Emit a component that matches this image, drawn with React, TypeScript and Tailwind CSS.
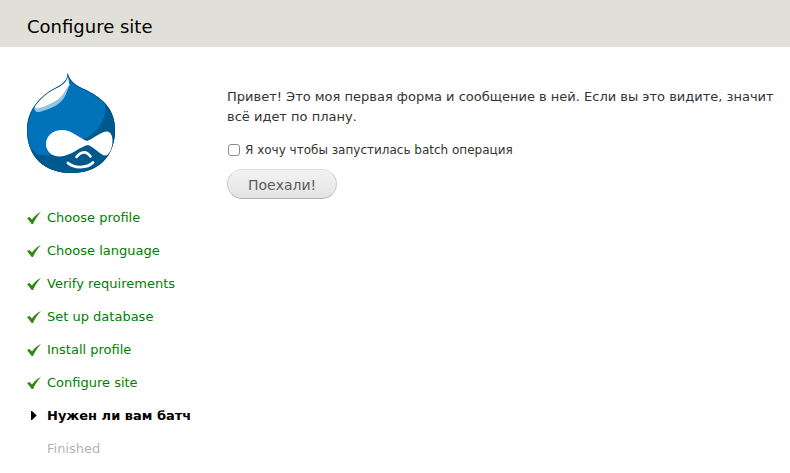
import React, { useState } from "react";

type TaskState = "done" | "active" | "pending";

const tasks: { name: string; state: TaskState }[] = [
  { name: "Choose profile", state: "done" },
  { name: "Choose language", state: "done" },
  { name: "Verify requirements", state: "done" },
  { name: "Set up database", state: "done" },
  { name: "Install profile", state: "done" },
  { name: "Configure site", state: "done" },
  { name: "Нужен ли вам батч", state: "active" },
  { name: "Finished", state: "pending" },
];

const taskStyles: Record<TaskState, string> = {
  done: "text-[#008000]",
  active: "font-bold text-black",
  pending: "text-[#b4b4b4]",
};

const dropOutline =
  "M40.700 0C43 9 49 12.500 57 16C74 24 88 35 88 56.500C88 85 70 100 44 100C18 100 0 84 0 57.500C0 39 10 27 22 18.500C33 12 40.500 10 40.700 0Z";

function Logo() {
  return (
    <svg width="88" height="100" viewBox="0 0 88 100" role="img" aria-label="Drupal">
      <defs>
        <clipPath id="drop">
          <path d={dropOutline} />
        </clipPath>
      </defs>
      <g clipPath="url(#drop)">
        <rect width="88" height="100" fill="#0073ba" />
        <path d="M75 22C82 38 78 55 56 67L19 76L23 82C16 83 9 82 5 76L0 100H88V22Z" fill="#00598e" />
        <path d="M40.700 3L42.500 12C41 15 40 20 37 25C32 33 20 37 12 39C8 39.500 6 36 8 32L30 18Z" fill="#93c5e4" />
        <path d="M40.700 1C41.300 5 41.500 9 42.500 12C39 15 38.500 19 34 23.500C29 29 19 33 12 35C8.500 36 7 34 9 30C12 24 20 19 28 15.500C36 12 40.500 9 40.700 1Z" fill="#fff" />
        <path d={dropOutline} fill="none" stroke="#004f7e" strokeWidth="1.500" />
      </g>
      <path d="M35 57C45 57 52 65 60 68C66 66 74 58.500 80 58.500C84 59 85.500 63 85.500 68C85.500 75 82 82.500 78.500 82.500C74 82.500 67 74 61 72C54 73 43 83.500 33 83.500C24 83.500 19 78 19 71C19 63 26 57 35 57Z" fill="#fff" />
      <path d="M49.500 84C53 79 59 77 63.500 83.500" fill="none" stroke="#fff" strokeWidth="2.600" strokeLinecap="round" />
      <path d="M41 90C47 95.500 60 95.500 66 89.500" fill="none" stroke="#fff" strokeWidth="2.800" strokeLinecap="round" />
    </svg>
  );
}

function TaskIcon({ state }: { state: TaskState }) {
  if (state === "pending") return <span className="w-[14px] shrink-0" />;
  return (
    <svg width="14" height="14" viewBox="0 0 14 14" className="shrink-0" aria-hidden="true">
      {state === "done" ? (
        <path d="M0 7L2.500 6L5 8.500C7.500 5 10.500 2.400 14 1C10.500 4.500 8 8.500 6 13L4.700 13Z" fill="#338812" />
      ) : (
        <path d="M4 2H5L9.700 6.500L5 11H4Z" fill="#000" />
      )}
    </svg>
  );
}

export default function App() {
  const [batch, setBatch] = useState(false);
  return (
    <div className="min-h-screen bg-white font-['DejaVu_Sans',sans-serif] text-[13px] leading-5 text-[#333]">
      <header className="bg-[#e0e0d8] px-[27px] pt-[15px] pb-2">
        <h1 className="text-lg leading-6 text-black">Configure site</h1>
      </header>
      <div className="flex items-start pt-[26px] pr-4 pl-[27px]">
        <aside className="w-[200px] shrink-0">
          <Logo />
          <ol className="mt-[35px] flex flex-col gap-[13px]">
            {tasks.map((task) => (
              <li key={task.name} className={`flex items-center gap-[6px] ${taskStyles[task.state]}`}>
                <TaskIcon state={task.state} />
                {task.name}
              </li>
            ))}
          </ol>
        </aside>
        <main className="min-w-0 flex-1 pt-[14px]">
          <p>Привет! Это моя первая форма и сообщение в ней. Если вы это видите, значит всё идет по плану.</p>
          <form onSubmit={(event) => event.preventDefault()}>
            <div className="mt-[13px] flex items-center gap-[5px] pl-px">
              <input
                id="batch"
                type="checkbox"
                checked={batch}
                onChange={(event) => setBatch(event.target.checked)}
                className="size-3 appearance-none rounded-[3px] border border-[#8f8b86] bg-white checked:bg-[#0073ba]"
              />
              <label htmlFor="batch" className="text-xs leading-5">
                Я хочу чтобы запустилась batch операция
              </label>
            </div>
            <button
              type="submit"
              className="mt-[9px] h-[30px] rounded-full border border-[#cccccc] border-t-[#e0e0e0] border-b-[#b0b0b0] bg-linear-to-b from-[#f3f3f3] to-[#e4e4e4] px-5 pt-0.5 text-sm text-[#5a5a5a]"
            >
              Поехали!
            </button>
          </form>
        </main>
      </div>
    </div>
  );
}
